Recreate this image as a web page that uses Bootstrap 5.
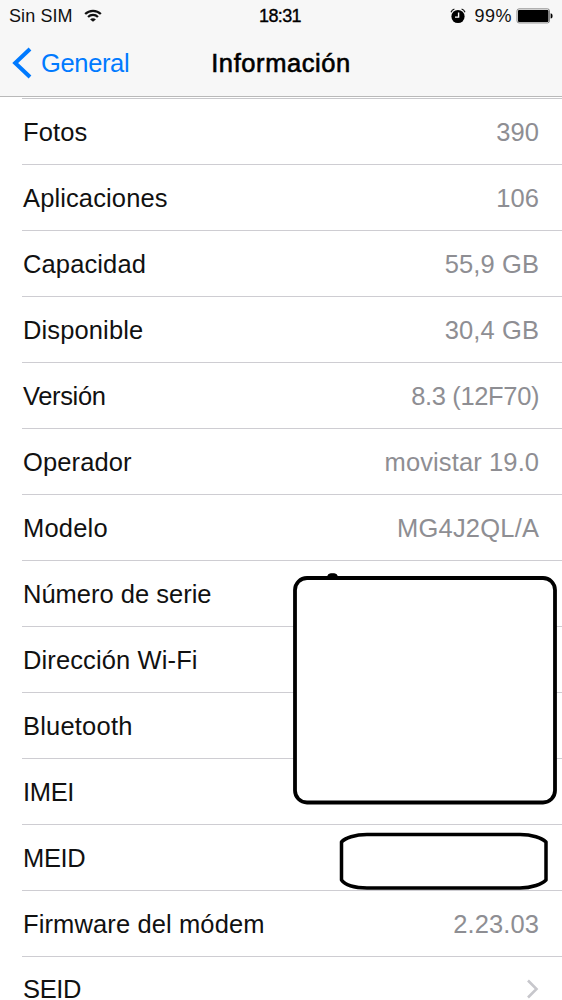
<!DOCTYPE html>
<html lang="es">
<head>
<meta charset="utf-8">
<meta name="viewport" content="width=device-width, initial-scale=1">
<title>Información</title>
<link href="https://cdn.jsdelivr.net/npm/bootstrap@5.3.0/dist/css/bootstrap.min.css" rel="stylesheet">
<style>
body{font-family:"Liberation Sans",Arial,sans-serif;font-size:25.5px;line-height:30px;color:#111;background:#fff;overflow:hidden}
.screen{height:1000px}
.topbar{height:97px;background:#f7f7f7;border-bottom:1px solid #b9b9b9}
.status{height:31px;font-size:18px;line-height:20px;padding:0 9px}
.title-row{height:64px;padding:0 12px}
.back{color:#007aff;letter-spacing:-.35px}
.medium{-webkit-text-stroke:.6px currentColor;color:#000}
.page-title{font-size:25.5px;line-height:28px;letter-spacing:.58px}
.carrier{margin-right:11px;letter-spacing:.1px}
.percent{letter-spacing:.5px}
.clock{letter-spacing:-.6px;padding-right:2px;-webkit-text-stroke-width:.35px}
.info{margin:1px 0 0 22px;border-top:1px solid #c8c8cb}
.info .list-group-item{height:66px;padding:1px 23px 0 1px;border-width:0 0 1px;border-color:#cecdd2;color:#111;background:transparent;letter-spacing:.12px}
.info .list-group-item:last-child{height:43px;padding-top:0;line-height:22px;border:0}
.value{color:#8e8e93;margin-right:-.15px}
.info .narrow{letter-spacing:-.35px}
.info .wide{letter-spacing:.2px}
.cover{left:0;top:0;pointer-events:none}
svg{display:block}
</style>
</head>
<body>
<main class="screen position-relative overflow-hidden">
  <header class="topbar">
    <div class="status row g-0 align-items-center">
      <div class="col d-flex align-items-center">
        <span class="carrier">Sin SIM</span>
        <svg width="18" height="14" viewBox="0 0 20 15" fill="none" stroke="#111" stroke-width="2.5"><path d="M1.3 5.3a12.3 12.3 0 0 1 17.400 0M4.500 8.600a7.800 7.800 0 0 1 11 0"/><path d="M10 14 6.800 11.400a4.500 4.500 0 0 1 6.400 0z" fill="#111" stroke="none"/></svg>
      </div>
      <div class="col-auto clock medium">18:31</div>
      <div class="col d-flex align-items-center justify-content-end">
        <svg class="me-2" width="16" height="16" viewBox="0 0 16 16"><circle cx="8" cy="8.500" r="6.600"/><path d="M1 4.200Q2 1.800 4.400 1M15 4.200Q14 1.800 11.600 1" fill="none" stroke="#111" stroke-width="1.200"/><path d="M8.600 4.500v4.600H5" fill="none" stroke="#fff" stroke-width="1.400"/></svg>
        <span class="percent">99%</span>
        <svg class="ms-1" width="37" height="16" viewBox="0 0 37 16"><rect x="1" y=".9" width="32.500" height="14" rx="2" fill="#fff" stroke="#777" stroke-width=".9"/><rect x="2" y="1.900" width="30.500" height="12" rx="1"/><path d="M34.600 5.200q2 .2 2 2.700t-2 2.700z"/></svg>
      </div>
    </div>
    <nav class="title-row row g-0 align-items-center">
      <div class="col"><a class="back d-flex align-items-center text-decoration-none" href="#"><svg class="me-2" width="21" height="32" viewBox="0 0 21 32" fill="none" stroke="#007aff" stroke-width="4"><path d="M18 2 3.200 16 18 30"/></svg><span>General</span></a></div>
      <h1 class="col-auto m-0 page-title medium fw-normal">Información</h1>
      <div class="col"></div>
    </nav>
  </header>
  <ul class="info list-group list-group-flush">
    <li class="list-group-item d-flex align-items-center justify-content-between"><span>Fotos</span><span class="value">390</span></li>
    <li class="list-group-item d-flex align-items-center justify-content-between"><span>Aplicaciones</span><span class="value">106</span></li>
    <li class="list-group-item d-flex align-items-center justify-content-between"><span>Capacidad</span><span class="value">55,9 GB</span></li>
    <li class="list-group-item d-flex align-items-center justify-content-between"><span>Disponible</span><span class="value">30,4 GB</span></li>
    <li class="list-group-item d-flex align-items-center justify-content-between"><span class="narrow">Versión</span><span class="value narrow">8.3 (12F70)</span></li>
    <li class="list-group-item d-flex align-items-center justify-content-between"><span>Operador</span><span class="value">movistar 19.0</span></li>
    <li class="list-group-item d-flex align-items-center justify-content-between"><span class="wide">Modelo</span><span class="value wide">MG4J2QL/A</span></li>
    <li class="list-group-item d-flex align-items-center"><span style="letter-spacing:0">Número de serie</span></li>
    <li class="list-group-item d-flex align-items-center"><span>Dirección Wi-Fi</span></li>
    <li class="list-group-item d-flex align-items-center"><span class="wide">Bluetooth</span></li>
    <li class="list-group-item d-flex align-items-center"><span class="narrow">IMEI</span></li>
    <li class="list-group-item d-flex align-items-center"><span class="narrow">MEID</span></li>
    <li class="list-group-item d-flex align-items-center justify-content-between"><span>Firmware del módem</span><span class="value">2.23.03</span></li>
    <li class="list-group-item d-flex align-items-end justify-content-between"><span class="narrow">SEID</span><svg width="13" height="22" viewBox="0 0 13 22" fill="none" stroke="#c7c7cc" stroke-width="2.600"><path d="M2 2.500 10.500 11 2 19.500"/></svg></li>
  </ul>
  <!-- hand-drawn frames hiding the private values -->
  <svg class="cover position-absolute" width="562" height="1000" viewBox="0 0 562 1000" fill="#fff" stroke="#000" stroke-width="3.800">
    <path d="M327.500 577q.5-3.200 3-3.200h4q2.500 0 3 3.200z" fill="#000" stroke-width="1"/>
    <rect x="295" y="578" width="260" height="224.500" rx="12"/>
    <path d="M341.500 842C345 838 355 834.500 367 834.500H520C532 834.500 542 838 546 842V880C542 884 532 888 520 888H367C355 888 345 885 341.500 880Z" stroke-width="3.500" stroke-linejoin="round"/>
  </svg>
</main>
<script src="https://cdn.jsdelivr.net/npm/bootstrap@5.3.0/dist/js/bootstrap.bundle.min.js"></script>
</body>
</html>
